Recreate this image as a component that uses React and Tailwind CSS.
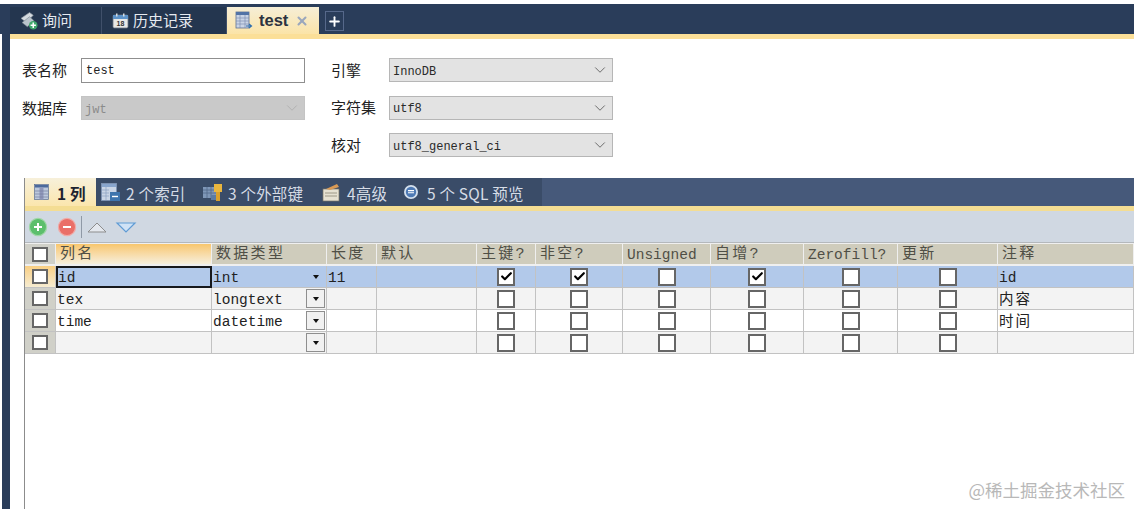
import { ChevronDown, Check, Plus, X } from "lucide-react";

var CJK = "font-['Noto_Sans_CJK_SC','Liberation_Sans',sans-serif]";
var MONO = "font-['Liberation_Mono','Noto_Sans_CJK_SC',monospace]";
var GRID = "grid grid-cols-[31px_156px_115px_50px_100px_59px_87px_88px_93px_94px_100px_136px]";

var HEADERS = [
  { label: "列名", active: true },
  { label: "数据类型" },
  { label: "长度" },
  { label: "默认" },
  { label: "主键?" },
  { label: "非空?" },
  { label: "Unsigned", latin: true },
  { label: "自增?" },
  { label: "Zerofill?", latin: true },
  { label: "更新" },
  { label: "注释" },
];

var ROWS = [
  { name: "id", type: "int", len: "11", pk: true, nn: true, ai: true, note: "id", sel: true },
  { name: "tex", type: "longtext", note: "内容", wide: true },
  { name: "time", type: "datetime", note: "时间", wide: true },
  { name: "", type: "", note: "" },
];

function QueryIcon() {
  return (
    <svg width="18" height="18" viewBox="0 0 17 17" className="shrink-0">
      <path d="M1 6 L9 0.5 L12.5 3 L6 10 Z" fill="#d5dbe0" stroke="#8d969e" strokeWidth="0.6" />
      <path d="M2 10 L9 4.5 L13 8 L7 14 Z" fill="#b9c3cb" stroke="#7f8a94" strokeWidth="0.6" />
      <circle cx="12.5" cy="12.5" r="4" fill="#3fa66b" />
      <path d="M12.5 10 V15 M10 12.5 H15" stroke="#fff" strokeWidth="1.4" />
    </svg>
  );
}

function CalendarIcon() {
  return (
    <svg width="17" height="16" viewBox="0 0 17 16" className="shrink-0">
      <rect x="1" y="2" width="15" height="13" rx="1.5" fill="#e8e8e6" stroke="#6b7480" strokeWidth="0.8" />
      <rect x="1" y="2" width="15" height="4" fill="#5d93c9" />
      <rect x="4" y="0.5" width="1.5" height="3" fill="#d8dde2" />
      <rect x="11" y="0.5" width="1.5" height="3" fill="#d8dde2" />
      <text x="8.5" y="13" fontSize="7" fontWeight="700" textAnchor="middle" fill="#333" fontFamily="Liberation Sans">18</text>
    </svg>
  );
}

function TableIcon() {
  return (
    <svg width="18" height="20" viewBox="0 0 18 20" className="shrink-0">
      <rect x="1" y="1" width="13" height="16" fill="#c9d4e6" stroke="#5c6f92" strokeWidth="0.8" />
      <rect x="1" y="1" width="13" height="3" fill="#5273a6" />
      <path d="M1 7 H14 M1 10 H14 M1 13 H14 M5 4 V17 M10 4 V17" stroke="#7e90b2" strokeWidth="0.7" />
      <path d="M11 15 H16 M14 13 L16.5 15 L14 17" stroke="#2f6fb0" strokeWidth="1.2" fill="none" />
    </svg>
  );
}

function ColumnsIcon() {
  return (
    <svg width="16" height="16" viewBox="0 0 16 16" className="shrink-0">
      <rect x="0.5" y="0.5" width="14" height="15" fill="#bcc8dc" stroke="#5a6e90" strokeWidth="0.7" />
      <rect x="1" y="1" width="13" height="2.5" fill="#4c6a9c" />
      <rect x="5.5" y="3.5" width="4" height="12" fill="#8f97bb" />
      <path d="M1 7 H14 M1 10 H14 M1 13 H14" stroke="#76809f" strokeWidth="0.7" />
    </svg>
  );
}

function IndexIcon() {
  return (
    <svg width="20" height="19" viewBox="0 0 20 19" className="shrink-0">
      <rect x="0.5" y="0.5" width="15" height="17" fill="#c9d5e6" stroke="#7d93b5" strokeWidth="0.8" />
      <rect x="1" y="1" width="14" height="3" fill="#88a5cd" />
      <path d="M1 7 H8 M1 10 H8 M1 13 H8 M5 4 V17" stroke="#8aa0c0" strokeWidth="0.7" />
      <rect x="9" y="9" width="10" height="9" fill="#3d74ad" />
      <path d="M11 13.5 H17" stroke="#fff" strokeWidth="1.4" />
    </svg>
  );
}

function ForeignIcon() {
  return (
    <svg width="21" height="19" viewBox="0 0 21 19" className="shrink-0">
      <rect x="0" y="4" width="13" height="11" fill="#7f97b8" />
      <path d="M0 7 H13 M0 10 H13 M4 4 V15 M8 4 V15" stroke="#53698a" strokeWidth="0.8" />
      <rect x="11" y="1" width="8" height="8" fill="#e9b63e" />
      <rect x="13" y="9" width="4" height="9" fill="#d9a02c" />
      <rect x="8" y="12" width="5" height="5" fill="#5b7ba4" />
    </svg>
  );
}

function AdvancedIcon() {
  return (
    <svg width="19" height="19" viewBox="0 0 19 19" className="shrink-0">
      <rect x="1" y="6" width="16" height="12" fill="#e6e1d2" stroke="#7b7666" strokeWidth="0.7" />
      <path d="M3 10 H15 M3 13 H15" stroke="#8a8674" strokeWidth="0.8" />
      <path d="M4 6 L15 1 L17 4 L8 7 Z" fill="#d99a55" />
    </svg>
  );
}

function SqlIcon() {
  return (
    <svg width="17" height="17" viewBox="0 0 17 17" className="shrink-0">
      <circle cx="8" cy="8" r="7" fill="#d4e0ee" />
      <circle cx="8" cy="8" r="5.2" fill="#4d79b4" />
      <path d="M5 6.6 H11 M5 8.8 H11" stroke="#fff" strokeWidth="1.1" />
    </svg>
  );
}

function RoundButton({ color, ring, vertical }) {
  return (
    <svg width="20" height="20" viewBox="0 0 20 20" className="shrink-0">
      <circle cx="10" cy="10" r="8.6" fill={color} stroke={ring} strokeWidth="1.2" />
      <path d={vertical ? "M6 10 H14 M10 6 V14" : "M6 10 H14"} stroke="#fff" strokeWidth="2" />
    </svg>
  );
}

function MainTab({ icon, label, active, width }) {
  return (
    <div
      className={
        "h-full flex items-center shrink-0 " + width + " " +
        (active ? "pl-[8px] bg-gradient-to-b from-[#f6eed6] to-[#fbe4a8]" : "pl-[10px] bg-[#24364f] border-r border-[#40506a]")
      }
    >
      {icon}
      {active ? (
        <>
          <span className="ml-[6px] text-[16.5px] font-bold text-[#2c3340] font-['Liberation_Sans',sans-serif]">{label}</span>
          <X size={14} strokeWidth={3.5} className="ml-[7px] text-[#9aa7bd]" />
        </>
      ) : (
        <span className={"ml-[4px] text-[15px] text-[#e6eaf0] " + CJK}>{label}</span>
      )}
    </div>
  );
}

function SubTab({ icon, label, active, box }) {
  return (
    <div
      className={
        "h-full flex items-center shrink-0 " + box + " " +
        (active ? "bg-gradient-to-b from-[#f7f0da] to-[#fbe6ad]" : "bg-[#3a4c68]")
      }
    >
      {icon}
      <span className={"whitespace-nowrap pt-[3px] text-[15.5px] tracking-[0.2px] " + CJK + (active ? " font-bold text-[#1c2230]" : " text-[#d6dce6]")}>
        {label}
      </span>
    </div>
  );
}

function Field({ label, labelWidth, children }) {
  return (
    <div className="flex items-center h-[26px]">
      <span className={"text-[15px] text-[#222] shrink-0 " + labelWidth + " " + CJK}>{label}</span>
      {children}
    </div>
  );
}

function Combo({ value, disabled }) {
  return (
    <div
      className={
        "w-[224px] h-[24px] flex items-center justify-between pl-[3px] pr-[3px] border " +
        (disabled ? "bg-[#c9c9c9] border-[#c4c4c4]" : "bg-[#e3e3e3] border-[#b6b6b6]")
      }
    >
      <span className={"pt-[3px] text-[12px] " + MONO + (disabled ? " text-[#8b8b8b]" : " text-[#2a2a2a]")}>{value}</span>
      <ChevronDown size={18} strokeWidth={1.3} className={disabled ? "text-[#b0b0b0]" : "text-[#6a6a6a]"} />
    </div>
  );
}

function Box({ checked, small }) {
  return (
    <div
      className={
        "flex items-center justify-center bg-white border-2 border-[#666] " +
        (small ? "w-[16px] h-[15px]" : "w-[18px] h-[18px]")
      }
    >
      {checked && <Check size={13} strokeWidth={4} className="text-black" />}
    </div>
  );
}

function HeaderCell({ label, active, latin }) {
  return (
    <div
      className={
        "h-[20px] flex items-center pl-[4px] pt-[3px] mr-px overflow-hidden whitespace-nowrap text-[#4f4f46] " + MONO + " " +
        (latin ? "text-[14.5px] " : "text-[15px] tracking-[2.3px] ") +
        (active ? "bg-gradient-to-b from-[#f8c66c] to-[#f6efdc]" : "bg-[#cfccbc]")
      }
    >
      {label}
    </div>
  );
}

function CheckCell({ checked, bg }) {
  return (
    <div className={"flex items-center justify-center border-r border-b border-[#c2c2c2] " + bg}>
      <Box checked={checked} />
    </div>
  );
}

function TextCell({ bg, children, outlined, wide }) {
  return (
    <div
      className={
        "flex items-center overflow-hidden whitespace-nowrap text-[14.5px] leading-[18px] text-[#222] " + MONO + " " + bg + " " +
        (wide ? "tracking-[2px] " : "") +
        (outlined ? "border-2 border-[#16181c]" : "pl-[1px] border-r border-b border-[#c2c2c2]")
      }
    >
      <span className="pt-[2px]">{children}</span>
    </div>
  );
}

function TypeCell({ value, bg, flat }) {
  return (
    <div className={"flex items-center justify-between pl-px pr-px border-r border-b border-[#c2c2c2] " + bg}>
      <span className={"pt-[2px] text-[14.5px] leading-[18px] text-[#222] " + MONO}>{value}</span>
      <div className={"w-[19px] h-[19px] flex items-center justify-center " + (flat ? "" : "bg-[#f1f1f1] border border-[#8e8e8e]")}>
        <div className="w-0 h-0 border-x-[3px] border-x-transparent border-t-[4px] border-t-[#111]" />
      </div>
    </div>
  );
}

function Row({ row, index }) {
  var bg = row.sel ? "bg-[#b2c9ea]" : index % 2 === 0 ? "bg-white" : "bg-[#f3f3f3]";
  return (
    <div className={GRID + " grid-rows-[22px]"}>
      <div className={"flex items-center justify-center border-r border-b border-[#c2c2c2] " + (row.sel ? "bg-gradient-to-b from-[#f9cf83] to-[#f6ecd0]" : "bg-[#d0d0c8]")}>
        <Box small />
      </div>
      <TextCell bg={bg} outlined={row.sel}>{row.name}</TextCell>
      <TypeCell value={row.type} bg={bg} flat={row.sel} />
      <TextCell bg={bg}>{row.len}</TextCell>
      <TextCell bg={bg} />
      <CheckCell bg={bg} checked={row.pk} />
      <CheckCell bg={bg} checked={row.nn} />
      <CheckCell bg={bg} />
      <CheckCell bg={bg} checked={row.ai} />
      <CheckCell bg={bg} />
      <CheckCell bg={bg} />
      <TextCell bg={bg} wide={row.wide}>{row.note}</TextCell>
    </div>
  );
}

export default function App() {
  return (
    <div className="relative w-[1134px] h-[509px] overflow-hidden bg-white flex flex-col">
      <div className="h-[4px] shrink-0 bg-white" />
      <div className="h-[30px] shrink-0 bg-[#2a3d5a] flex items-end pl-[10px] pt-[3px]">
        <MainTab icon={<QueryIcon />} label="询问" width="w-[92px]" />
        <MainTab icon={<CalendarIcon />} label="历史记录" width="w-[125px]" />
        <MainTab icon={<TableIcon />} label="test" width="w-[92px]" active />
        <div className="ml-[6px] mb-[3px] w-[19px] h-[20px] flex items-center justify-center border border-[#56688a]">
          <Plus size={15} strokeWidth={3} className="text-white" />
        </div>
      </div>
      <div className="flex-1 flex min-h-0">
        <div className="w-[10px] shrink-0 flex">
          <div className="w-[2px] bg-white" />
          <div className="flex-1 bg-[#2a3d5a]" />
        </div>
        <div className="flex-1 min-w-0 flex flex-col">
          <div className="h-[5px] shrink-0 bg-[#fbdf98]" />

          <div className="h-[139px] shrink-0 flex pl-[12px] pt-[18px]">
            <div className="w-[309px] flex flex-col gap-[12px]">
              <Field label="表名称" labelWidth="w-[59px]">
                <div className="w-[224px] h-[25px] flex items-center pl-[4px] pt-[2px] bg-white border border-[#8f8f8f]">
                  <span className={"text-[12px] text-[#222] " + MONO}>test</span>
                </div>
              </Field>
              <Field label="数据库" labelWidth="w-[59px]">
                <Combo value="jwt" disabled />
              </Field>
            </div>
            <div className="flex flex-col gap-[11.5px]">
              <Field label="引擎" labelWidth="w-[58px]"><Combo value="InnoDB" /></Field>
              <Field label="字符集" labelWidth="w-[58px]"><Combo value="utf8" /></Field>
              <Field label="核对" labelWidth="w-[58px]"><Combo value="utf8_general_ci" /></Field>
            </div>
          </div>

          <div className="flex-1 min-h-0 ml-[14px] border-l border-[#8c8c8c] flex flex-col">
            <div className="h-[28px] shrink-0 bg-[#46597a] flex items-end">
              <SubTab icon={<ColumnsIcon />} label="1 列" active box="w-[71px] pl-[9px] gap-[7px]" />
              <SubTab icon={<IndexIcon />} label="2 个索引" box="w-[102px] pl-[5px] gap-[5px]" />
              <SubTab icon={<ForeignIcon />} label="3 个外部键" box="w-[119px] pl-[5px] gap-[4px]" />
              <SubTab icon={<AdvancedIcon />} label="4高级" box="w-[77px] pl-[5px] gap-[6px]" />
              <SubTab icon={<SqlIcon />} label="5 个 SQL 预览" box="w-[148px] pl-[9px] gap-[7px]" />
            </div>
            <div className="h-[5px] shrink-0 bg-[#f4dd93]" />
            <div className="h-[32px] shrink-0 bg-[#d0d8e2] flex items-center pl-[3px] border-b border-[#b4b8bc]">
              <RoundButton color="#5cbf6c" ring="#9fd6a6" vertical />
              <div className="w-[9px]" />
              <RoundButton color="#ea6f68" ring="#f0aaa6" />
              <div className="w-px h-[22px] bg-[#8f99a6] ml-[4px]" />
              <svg width="50" height="14" viewBox="0 0 50 14" className="ml-[5px]">
                <path d="M1 12 L10 3 L19 12 Z" fill="#e4e8ee" stroke="#8d8d8d" strokeWidth="1" />
                <path d="M30 3 L48 3 L39 12 Z" fill="#cfe2f6" stroke="#5f9bd4" strokeWidth="1.2" />
              </svg>
            </div>

            <div className={GRID + " h-[23px] shrink-0 bg-[#efefef] items-start pt-px"}>
              <div className="h-[20px] mr-px flex items-center justify-center bg-[#d0d0c8]">
                <Box small />
              </div>
              {HEADERS.map(function (h) {
                return <HeaderCell key={h.label} label={h.label} active={h.active} latin={h.latin} />;
              })}
            </div>
            {ROWS.map(function (row, i) {
              return <Row key={i} row={row} index={i} />;
            })}
          </div>
        </div>
      </div>

      <div className={"absolute right-[9px] bottom-[6px] text-[17.5px] text-[#b8b8b8] " + CJK}>@稀土掘金技术社区</div>
    </div>
  );
}
